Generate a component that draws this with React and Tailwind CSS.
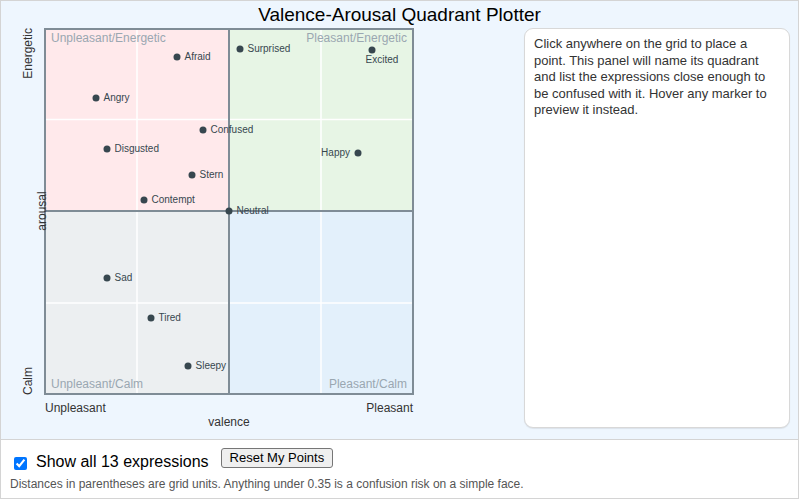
import React, { useState } from 'react';

// pixel positions of each expression inside the plot (page coords)
const EXPRESSIONS = [
  { name: 'Afraid', x: 176, y: 57 },
  { name: 'Surprised', x: 239, y: 49 },
  { name: 'Excited', x: 371, y: 50, pos: 'below' },
  { name: 'Angry', x: 95, y: 98 },
  { name: 'Confused', x: 202, y: 130 },
  { name: 'Disgusted', x: 106, y: 149 },
  { name: 'Happy', x: 357, y: 153, pos: 'left' },
  { name: 'Stern', x: 191, y: 175 },
  { name: 'Contempt', x: 143, y: 200 },
  { name: 'Neutral', x: 228, y: 211 },
  { name: 'Sad', x: 106, y: 278 },
  { name: 'Tired', x: 150, y: 318 },
  { name: 'Sleepy', x: 187, y: 366 },
];

const FONT = '"Liberation Sans", Arial, sans-serif';

const QuadrantPlot = ({ showAll }) => {
  const left = 44;
  const right = 412;
  const top = 29;
  const bottom = 394;
  const cx = 228;
  const cy = 211;

  return (
    <svg width="420" height="404" viewBox="0 28 420 404" className="block shrink-0" style={{ fontFamily: FONT }}>
      {/* quadrant fills */}
      <rect x={left} y={top} width={cx - left} height={cy - top} fill="#ffe9eb" />
      <rect x={cx} y={top} width={right - cx} height={cy - top} fill="#e7f5e5" />
      <rect x={left} y={cy} width={cx - left} height={bottom - cy} fill="#eceff1" />
      <rect x={cx} y={cy} width={right - cx} height={bottom - cy} fill="#e3f0fb" />

      {/* grid */}
      {[136, 320].map((x) => (
        <line key={x} x1={x} y1={top} x2={x} y2={bottom} stroke="#ffffff" strokeWidth="1.5" />
      ))}
      {[119.5, 303].map((y) => (
        <line key={y} x1={left} y1={y} x2={right} y2={y} stroke="#ffffff" strokeWidth="1.5" />
      ))}

      {/* center axes */}
      <line x1={cx} y1={top} x2={cx} y2={bottom} stroke="#7f8c96" strokeWidth="2" />
      <line x1={left} y1={cy} x2={right} y2={cy} stroke="#7f8c96" strokeWidth="2" />
      <rect x={left} y={top} width={right - left} height={bottom - top} fill="none" stroke="#7f8c96" strokeWidth="2" />

      {/* quadrant names */}
      <g fontSize="12" fill="#9aa7b1">
        <text x="50" y="42">Unpleasant/Energetic</text>
        <text x="406" y="42" textAnchor="end">Pleasant/Energetic</text>
        <text x="50" y="388">Unpleasant/Calm</text>
        <text x="406" y="388" textAnchor="end">Pleasant/Calm</text>
      </g>

      {/* markers */}
      {showAll &&
        EXPRESSIONS.map((p) => (
          <g key={p.name}>
            <circle cx={p.x} cy={p.y} r="3.5" fill="#37474f" />
            {p.pos === 'below' ? (
              <text x={p.x + 10} y={p.y + 13} fontSize="10" fill="#37474f" textAnchor="middle">{p.name}</text>
            ) : p.pos === 'left' ? (
              <text x={p.x - 8} y={p.y + 2.5} fontSize="10" fill="#37474f" textAnchor="end">{p.name}</text>
            ) : (
              <text x={p.x + 7.5} y={p.y + 2.5} fontSize="10" fill="#37474f">{p.name}</text>
            )}
          </g>
        ))}

      {/* axis labels */}
      <g fontSize="12" fill="#333333">
        <text transform="translate(31,28) rotate(-90)" textAnchor="end">Energetic</text>
        <text transform="translate(31,395) rotate(-90)">Calm</text>
        <text transform="translate(45,211) rotate(-90)" textAnchor="middle">arousal</text>
        <text x="44" y="412">Unpleasant</text>
        <text x="412" y="412" textAnchor="end">Pleasant</text>
        <text x="228" y="426" textAnchor="middle">valence</text>
      </g>
    </svg>
  );
};

export default function App() {
  const [showAll, setShowAll] = useState(true);

  return (
    <div className="w-[799px] h-[499px] border border-[#d4d4d4] bg-white flex flex-col" style={{ fontFamily: FONT }}>
      {/* plot area */}
      <div className="h-[439px] bg-[#eef6fe] border-b border-[#d4d4d4] flex flex-col">
        <h1 className="h-[27px] text-[19px] leading-[27px] text-center text-black">Valence-Arousal Quadrant Plotter</h1>
        <div className="flex items-start">
          <QuadrantPlot showAll={showAll} />
          <div className="ml-[103px] w-[266px] h-[400px] bg-white border border-[#d8d8d8] rounded-[9px] shadow-[0_1px_1px_rgba(0,0,0,0.08)] px-[9px] py-[7px] text-[13px] leading-[16.5px] text-[#333]">
            Click anywhere on the grid to place a point. This panel will name its quadrant and list the expressions close enough to be confused with it. Hover any marker to preview it instead.
          </div>
        </div>
      </div>

      {/* controls */}
      <div className="flex-1 px-[9px] pt-[8px]">
        <div className="flex items-start">
          <input
            type="checkbox"
            checked={showAll}
            onChange={(e) => setShowAll(e.target.checked)}
            className="w-[13px] h-[13px] mt-[9px] ml-[4px] mr-[9px] accent-[#0075ff]"
          />
          <span className="mt-[5px] text-[16px] leading-[18px] text-black">Show all 13 expressions</span>
          <button className="ml-[12px] h-[20px] px-[8px] bg-[#efefef] border border-[#767676] rounded-[3px] text-[13px] leading-[18px] text-black">
            Reset My Points
          </button>
        </div>
        <p className="mt-[6px] text-[12px] leading-[14px] text-[#555]">
          Distances in parentheses are grid units. Anything under 0.35 is a confusion risk on a simple face.
        </p>
      </div>
    </div>
  );
}
